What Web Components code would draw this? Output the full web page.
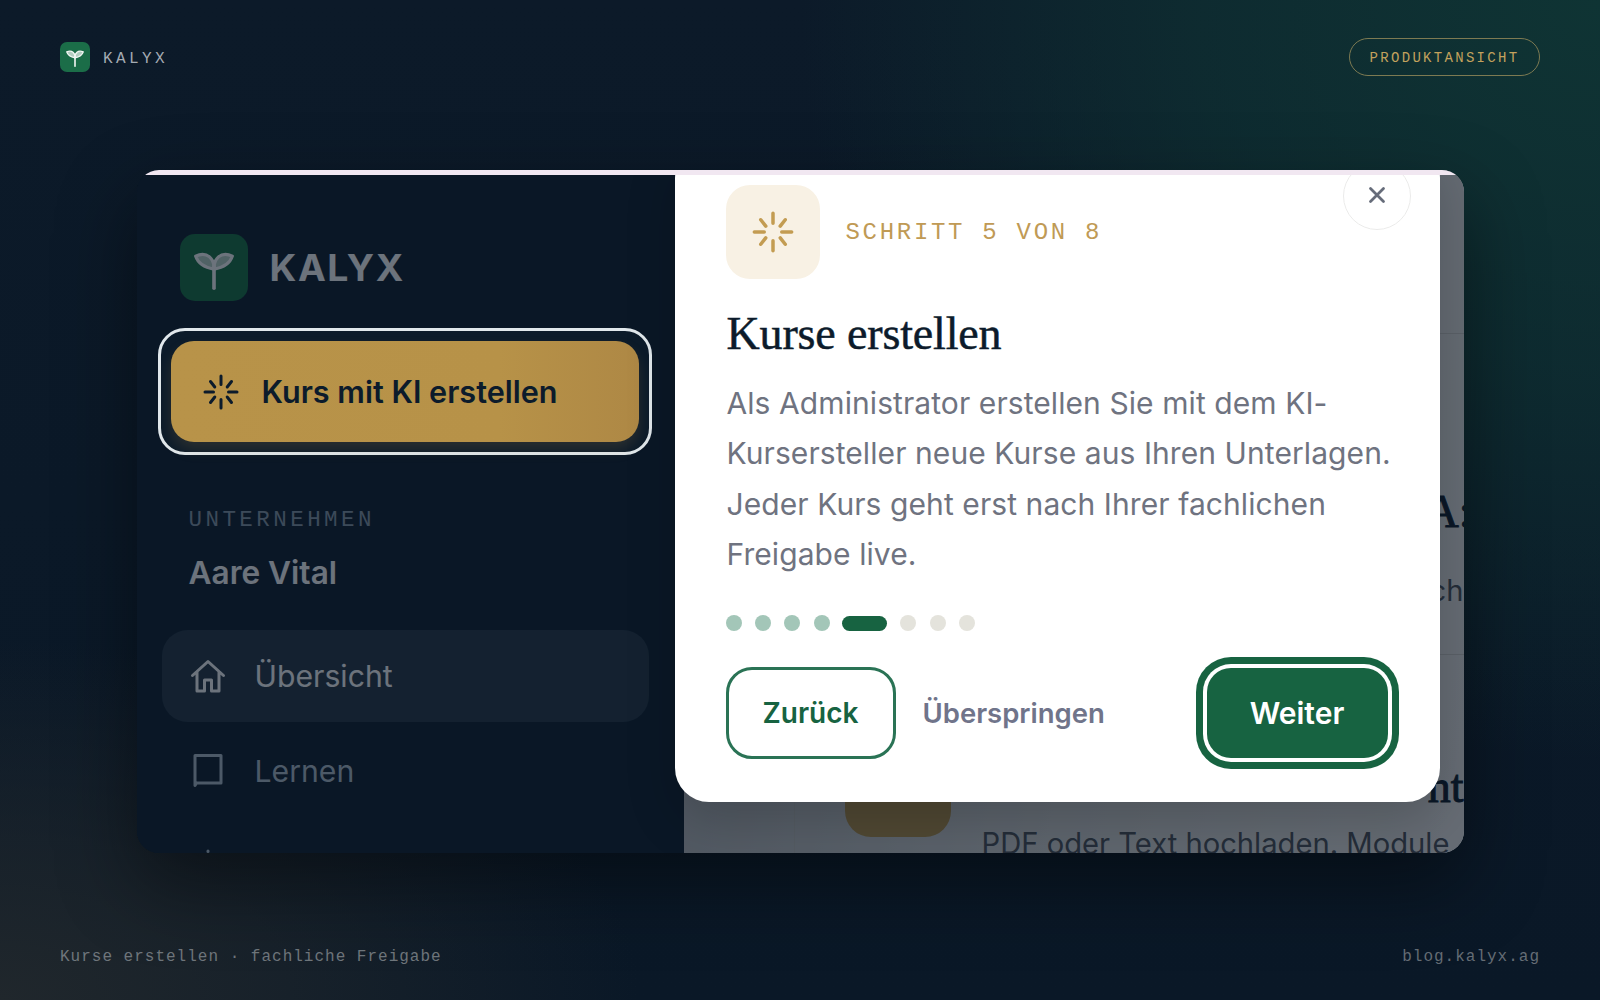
<!doctype html>
<html lang="de">
<head>
<meta charset="utf-8">
<title>Kalyx</title>
<style>
  html, body { margin: 0; height: 100%; background: #0a1828; }
</style>
</head>
<body>
<kalyx-page>
  <page-header slot="header"></page-header>
  <app-frame slot="frame">
    <side-bar slot="side"></side-bar>
    <main-pane slot="main"></main-pane>
    <tour-modal slot="modal"></tour-modal>
  </app-frame>
  <page-footer slot="footer"></page-footer>
</kalyx-page>

<script>
const SANS = `"Inter", "Open Sans", sans-serif`;
const MONO = `"Liberation Mono", "DejaVu Sans Mono", monospace`;
const SERIF = `"Liberation Serif", serif`;

const LOGO = /* html */ `
  <svg viewBox="0 0 24 24" width="100%" height="100%" fill="none" stroke="currentColor" stroke-linejoin="round" stroke-linecap="round">
    <path d="M12 19.4V11.5" stroke-width="1.3"/>
    <path d="M5.4 7.9C7.4 7 9.2 7.2 10.4 8.2C11.2 8.9 11.8 10 12 11.2V12.6C9.6 12.2 6.4 11 5.4 7.9Z" stroke-width="1.1" fill="currentColor" fill-opacity=".7"/>
    <path d="M18.6 7.9C16.6 7 14.8 7.2 13.6 8.2C12.8 8.9 12.2 10 12 11.2V12.6C14.4 12.2 17.6 11 18.6 7.9Z" stroke-width="1.1" fill="currentColor" fill-opacity=".7"/>
  </svg>`;

const SPARK = /* html */ `
  <svg viewBox="0 0 36 36" width="100%" height="100%" fill="none" stroke="currentColor" stroke-width="3" stroke-linecap="round">
    <path d="M18 2V10.5M18 25.5V34M2 18H10.5M25.5 18H34M7.5 7.5L11.8 13M28.5 7.5L24.2 13M7.5 28.5L11.8 23M28.5 28.5L24.2 23"/>
  </svg>`;

// small helper: every element is a template plus an open shadow root
function define (name, html) {
  const tpl = document.createElement('template');
  tpl.innerHTML = html;
  customElements.define(name, class extends HTMLElement {
    constructor () {
      super();
      this.attachShadow({ mode: 'open' });
      this.shadowRoot.appendChild(tpl.content.cloneNode(true));
    }
  });
}

define('kalyx-page', /* html */ `
  <style>
    :host {
      display: grid;
      grid-template-rows: 76px 1fr auto;
      box-sizing: border-box;
      width: 1600px;
      height: 1000px;
      padding: 38px 60px 34px;
      overflow: hidden;
      background:
        radial-gradient(800px 760px at 100% 0%, #0f3434 0%, rgba(15,52,52,.65) 50%, rgba(15,52,52,0) 100%),
        radial-gradient(640px 360px at 0% 100%, #20272c 0%, rgba(32,39,44,.6) 45%, rgba(32,39,44,0) 100%),
        linear-gradient(180deg, #0c1a29 0%, #0a1827 100%);
    }
    .mid { display: flex; justify-content: center; align-items: flex-start; padding-top: 56px; }
  </style>
  <slot name="header"></slot>
  <div class="mid"><slot name="frame"></slot></div>
  <slot name="footer"></slot>
`);

define('page-header', /* html */ `
  <style>
    :host { display: flex; justify-content: space-between; align-items: flex-start; height: 38px; }
    .brand { display: flex; align-items: center; gap: 13px; margin-top: 4px; }
    .tile { width: 30px; height: 30px; border-radius: 7px; background: #1b6d48; color: #f2f6f3; }
    .name { font: 400 16px ${MONO}; letter-spacing: 3.4px; color: #a4abb3; padding-top: 3px; }
    .pill {
      box-sizing: border-box; height: 38px; width: 191px; border: 1px solid #7d7a52; border-radius: 19px;
      display: flex; align-items: center; justify-content: center; padding-top: 2px;
      font: 400 14px ${MONO}; letter-spacing: 2.3px; color: #c3a25d;
    }
  </style>
  <div class="brand"><div class="tile">${LOGO}</div><span class="name">KALYX</span></div>
  <div class="pill">PRODUKTANSICHT</div>
`);

define('page-footer', /* html */ `
  <style>
    :host {
      display: flex; justify-content: space-between;
      font: 400 16px ${MONO}; letter-spacing: 1px; color: #6f767c;
    }
    span:last-child { color: #656d75; }
  </style>
  <span>Kurse erstellen · fachliche Freigabe</span>
  <span>blog.kalyx.ag</span>
`);

define('app-frame', /* html */ `
  <style>
    :host {
      display: block; position: relative; width: 1327px; height: 683px;
      border-radius: 22px; overflow: hidden; background: #0c1b2a;
      box-shadow: 0 30px 80px rgba(0,0,0,.45);
    }
    .app { display: grid; grid-template-columns: 547px 1fr; height: 100%; }
    .strip {
      position: absolute; z-index: 5; left: 0; right: 0; top: 0; height: 5px;
      background: #f1e7f1;
    }
    ::slotted(tour-modal) { position: absolute; z-index: 4; left: 538px; top: -26px; }
  </style>
  <div class="app"><slot name="side"></slot><slot name="main"></slot></div>
  <slot name="modal"></slot>
  <div class="strip"></div>
`);

define('side-bar', /* html */ `
  <style>
    :host { display: flex; flex-direction: column; box-sizing: border-box; padding: 64px 35px 0 25px; background: #0c1b2a; height: 683px; }
    .logo { display: flex; align-items: center; gap: 22px; margin-left: 18px; }
    .tile { width: 68px; height: 67px; border-radius: 15px; background: #147041; color: #fff; padding: 0; }
    .tile svg { display: block; }
    .word { font: 700 37.3px ${SANS}; letter-spacing: 1.6px; color: #fff; }
    ai-button { margin: 27px 0 0 -4px; }
    .label { margin: 52px 0 0 27px; font: 400 22.5px ${MONO}; letter-spacing: 3.45px; color: #8798a8; }
    .company { margin: 20px 0 0 27px; font: 600 31.6px ${SANS}; color: #fff; }
    nav { display: flex; flex-direction: column; gap: 3px; margin-top: 38px; }
  </style>
  <div class="logo"><div class="tile">${LOGO}</div><span class="word">KALYX</span></div>
  <ai-button></ai-button>
  <div class="label">UNTERNEHMEN</div>
  <div class="company">Aare Vital</div>
  <nav>
    <nav-item active>
      <svg slot="icon" viewBox="0 0 36 36" width="36" height="36" fill="none" stroke="currentColor" stroke-width="3" stroke-linejoin="round" stroke-linecap="round"><path d="M2.5 17.5L18 3.5L33.5 17.5M7 13.5V33H14.5V22H21.5V33H29V13.5"/></svg>
      Übersicht
    </nav-item>
    <nav-item>
      <svg slot="icon" viewBox="0 0 36 36" width="36" height="36" fill="none" stroke="currentColor" stroke-width="3" stroke-linejoin="round"><path d="M5 32.5V2.5H31V30H6.5Z"/></svg>
      Lernen
    </nav-item>
    <nav-item>
      <svg slot="icon" viewBox="0 0 36 36" width="36" height="36" fill="none" stroke="currentColor" stroke-width="3" stroke-linecap="round"><path d="M18 3V3.5"/></svg>
    </nav-item>
  </nav>
`);

define('ai-button', /* html */ `
  <style>
    :host {
      display: block; box-sizing: border-box; width: 494px; height: 128px; padding: 10px;
      border: 3px solid #e1e8ec; border-radius: 27px;
      /* spotlight: the dim layer of the whole product view hangs off this ring */
      box-shadow: 0 0 0 2000px rgba(10,22,36,.6);
      position: relative; z-index: 3;
    }
    .btn {
      height: 101px; border-radius: 23px; display: flex; align-items: center; gap: 23px; padding-left: 32px;
      background: linear-gradient(90deg, #b89349 0%, #b79248 70%, #ae8845 100%);
      box-shadow: 0 8px 14px rgba(170,135,70,.18);
      color: #0c1b2b; font: 600 30.6px ${SANS};
    }
    .ico { width: 36px; height: 36px; flex: none; }
  </style>
  <div class="btn"><span class="ico">${SPARK}</span>Kurs mit KI erstellen</div>
`);

define('nav-item', /* html */ `
  <style>
    :host {
      display: flex; align-items: center; gap: 29px; height: 92px; box-sizing: border-box; padding-left: 28px;
      border-radius: 26px; color: #afbeca; font: 400 30.2px ${SANS};
    }
    :host([active]) { background: #233443; color: #fff; }
    ::slotted(svg) { flex: none; }
  </style>
  <slot name="icon"></slot><slot></slot>
`);

define('main-pane', /* html */ `
  <style>
    :host {
      display: grid; grid-template-rows: 164px 321px 1fr; height: 683px; overflow: hidden;
      background: linear-gradient(100deg, #b4b6b8 0%, #dcdcda 55%, #f0eeeb 100%);
      color: #0c1b2b;
    }
    .row { border-bottom: 1px solid #d2d0cb; position: relative; }
    .r2 { display: flex; flex-direction: column; align-items: flex-end; padding-top: 152px; overflow: hidden; }
    .head { font: 400 46px/52px ${SERIF}; -webkit-text-stroke: 1px #0c1b2b; white-space: nowrap; margin-right: -8px; }
    .sub { font: 400 29.2px/36px ${SANS}; color: #4c5058; margin: 35px 0 0; white-space: nowrap; }
    .r3 { display: grid; grid-template-columns: 111px 1fr; min-height: 0; }
    .rail { border-right: 1px solid #c3c2bd; }
    .body { display: grid; grid-template-columns: 106px 1fr; column-gap: 31px; padding: 112px 0 0 50px; min-height: 0; }
    .tile { width: 106px; height: 70px; border-radius: 0 0 26px 26px; background: #b89349; position: relative; }
    .tile::after { content: ""; position: absolute; top: 0; left: 55px; border: 8px solid transparent; border-top: 11px solid #fff; border-bottom: 0; }
    .txt { overflow: hidden; }
    .r3 .head { text-align: right; margin: -6px 0 0; }
    .r3 .sub { margin: 13px 0 0; }
  </style>
  <div class="row"></div>
  <div class="row r2"><div class="head">A:</div><div class="sub">ch</div></div>
  <div class="r3">
    <div class="rail"></div>
    <div class="body">
      <div class="tile"></div>
      <div class="txt"><div class="head">nt</div><div class="sub">PDF oder Text hochladen. Module</div></div>
    </div>
  </div>
`);

define('tour-modal', /* html */ `
  <style>
    :host {
      display: block; box-sizing: border-box; width: 765px; height: 658px; padding: 41px 41px 0 51px;
      background: #fff; border-radius: 34px; color: #0c1b2b;
      box-shadow: 0 20px 50px rgba(0,0,0,.18);
    }
    .top { display: flex; align-items: center; gap: 26px; }
    .ico { width: 94px; height: 94px; border-radius: 24px; background: #f8f1e4; color: #c39c52; display: flex; align-items: center; justify-content: center; }
    .ico span { width: 42px; height: 42px; }
    .step { font: 400 24px ${MONO}; letter-spacing: 2.7px; color: #c09a55; }
    .close {
      position: absolute; right: 29px; top: 18px; width: 68px; height: 68px; box-sizing: border-box; padding-bottom: 3px;
      border: 1px solid #ebebea; border-radius: 50%; background: #fff; color: #666c7a;
      display: flex; align-items: center; justify-content: center;
    }
    h2 { margin: 27px 0 0 1px; font: 400 46px/56px ${SERIF}; letter-spacing: -.15px; -webkit-text-stroke: .5px #0c1b2b; color: #0c1b2b; }
    p { margin: 16px 0 0 1px; font: 400 30px/50.3px ${SANS}; letter-spacing: .08px; color: #6f7380; width: 680px; }
    .act { display: flex; align-items: center; margin-top: 36px; }
    .back {
      box-sizing: border-box; width: 170px; height: 92px; border: 3px solid #2a7355; border-radius: 26px;
      display: flex; align-items: center; justify-content: center;
      font: 600 28px ${SANS}; color: #176341;
    }
    .skip { margin-left: 27px; font: 600 27.5px ${SANS}; color: #70748a; }
    .next {
      margin-left: auto; margin-right: 11px; width: 181px; height: 90px; border-radius: 24px; background: #176341; color: #fff;
      display: flex; align-items: center; justify-content: center; font: 600 30px ${SANS};
      box-shadow: 0 0 0 4px #fff, 0 0 0 11px #176341;
    }
  </style>
  <div class="top"><div class="ico"><span>${SPARK}</span></div><div class="step">SCHRITT 5 VON 8</div></div>
  <div class="close">
    <svg viewBox="0 0 20 20" width="20" height="20" fill="none" stroke="currentColor" stroke-width="2.8" stroke-linecap="round"><path d="M3.5 3.5L16.5 16.5M16.5 3.5L3.5 16.5"/></svg>
  </div>
  <h2>Kurse erstellen</h2>
  <p>Als Administrator erstellen Sie mit dem KI-Kursersteller neue Kurse aus Ihren Unterlagen. Jeder Kurs geht erst nach Ihrer fachlichen Freigabe live.</p>
  <step-dots></step-dots>
  <div class="act">
    <div class="back">Zurück</div>
    <div class="skip">Überspringen</div>
    <div class="next">Weiter</div>
  </div>
`);

define('step-dots', /* html */ `
  <style>
    :host { display: flex; align-items: center; gap: 13.4px; margin-top: 36px; }
    i { width: 16px; height: 16px; border-radius: 50%; background: #e4e3dc; }
    i.done { background: #a3c6b8; }
    i.now { width: 45px; height: 15px; border-radius: 8px; background: #176341; margin: 0 -.6px; }
  </style>
  <i class="done"></i><i class="done"></i><i class="done"></i><i class="done"></i><i class="now"></i><i></i><i></i><i></i>
`);
</script>
</body>
</html>
